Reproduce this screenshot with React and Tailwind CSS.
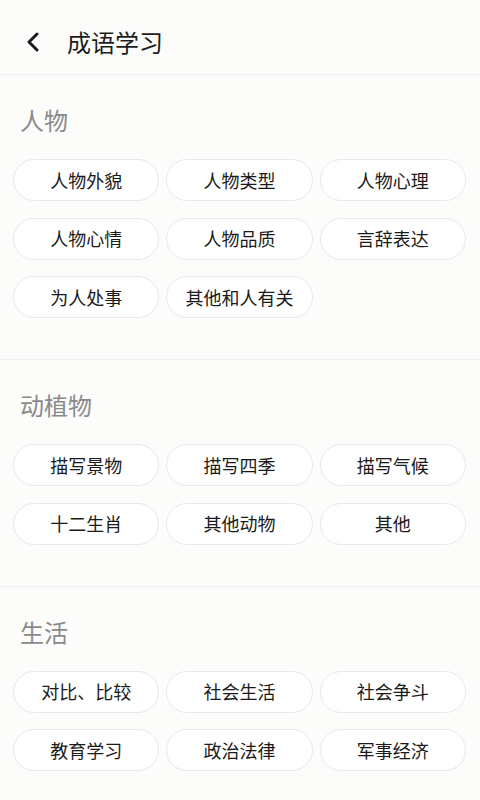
const sections = [
  {
    title: "人物",
    items: ["人物外貌", "人物类型", "人物心理", "人物心情", "人物品质", "言辞表达", "为人处事", "其他和人有关"],
  },
  {
    title: "动植物",
    items: ["描写景物", "描写四季", "描写气候", "十二生肖", "其他动物", "其他"],
  },
  {
    title: "生活",
    items: ["对比、比较", "社会生活", "社会争斗", "教育学习", "政治法律", "军事经济"],
  },
];

function BackIcon() {
  return (
    <svg width="14" height="20" viewBox="0 0 14 20" fill="none">
      <path d="M11 2 L3 10 L11 18" stroke="#1a1a1a" strokeWidth="3" strokeLinecap="round" strokeLinejoin="round" />
    </svg>
  );
}

export default function App() {
  return (
    <div
      className="flex h-[800px] flex-col overflow-hidden bg-[#fcfcfb]"
      style={{ fontFamily: '"Noto Sans CJK SC", "Noto Sans", sans-serif' }}
    >
      {/* header */}
      <div className="flex h-[75px] shrink-0 items-center border-b border-[#efefef] pt-[9px]">
        <button className="ml-[25px] flex h-10 w-4 items-center justify-center">
          <BackIcon />
        </button>
        <h1 className="ml-[26px] text-[24px] leading-8 text-[#1c1c1c]">成语学习</h1>
      </div>

      <div className="flex-1">
        {sections.map((s) => (
          <div key={s.title} className="border-b border-[#efefef] pt-[29px] pb-[41px] last:border-b-0">
            <h2 className="pl-[20px] text-[24px] leading-8 text-[#8a8a8a]">{s.title}</h2>
            <div className="mt-[23px] grid grid-cols-3 gap-x-[7px] gap-y-[16.5px] pl-[13px] pr-[14px]">
              {s.items.map((item) => (
                <div
                  key={item}
                  className="flex h-[42px] items-center justify-center rounded-full border-[1.5px] border-[#e8e8e8] bg-white text-[18px] text-[#1a1a1a]"
                >
                  {item}
                </div>
              ))}
            </div>
          </div>
        ))}
      </div>

      <div className="h-[2px] shrink-0 bg-[#2e2e2e]" />
    </div>
  );
}
